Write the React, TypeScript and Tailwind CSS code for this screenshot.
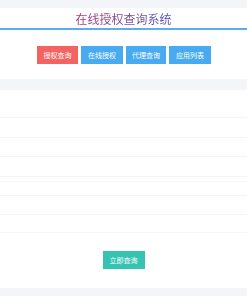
export default function App() {
  const font = { fontFamily: '"Noto Sans CJK SC", "Noto Sans", sans-serif' };
  const rows = [28, 20, 19, 20, 5, 14, 19, 18];
  return (
    <div className="w-[247px] h-[296px] bg-[#f3f5f8] flex flex-col overflow-hidden" style={font}>
      <div className="h-[8px] shrink-0" />
      <div className="bg-white h-[20px] shrink-0 flex items-center justify-center pt-[1px]">
        <span className="text-[12px] leading-none bg-gradient-to-r from-[#a8336f] to-[#4b4fc9] bg-clip-text text-transparent">
          在线授权查询系统
        </span>
      </div>
      <div className="h-[2px] bg-[#5ab0e6] shrink-0" />
      <div className="bg-white h-[49px] shrink-0 flex justify-center pt-[16px] gap-[3px] pl-[1px]">
        <div className="w-[41px] h-[18px] bg-[#f26361] text-white text-[7px] flex items-center justify-center">授权查询</div>
        <div className="w-[42px] h-[18px] bg-[#48aaf0] text-white text-[7px] flex items-center justify-center">在线授权</div>
        <div className="w-[40px] h-[18px] bg-[#48aaf0] text-white text-[7px] flex items-center justify-center">代理查询</div>
        <div className="w-[42px] h-[18px] bg-[#48aaf0] text-white text-[7px] flex items-center justify-center">应用列表</div>
      </div>
      <div className="h-[11px] shrink-0" />
      <div className="bg-white h-[198px] shrink-0 flex flex-col">
        {rows.map((h, i) => (
          <div key={i} className="border-b border-[#f4f5f7] shrink-0" style={{ height: h }} />
        ))}
        <div className="flex justify-center pt-[18px]">
          <div className="w-[42px] h-[18px] bg-[#36c4b2] text-white text-[7px] flex items-center justify-center">立即查询</div>
        </div>
      </div>
    </div>
  );
}
